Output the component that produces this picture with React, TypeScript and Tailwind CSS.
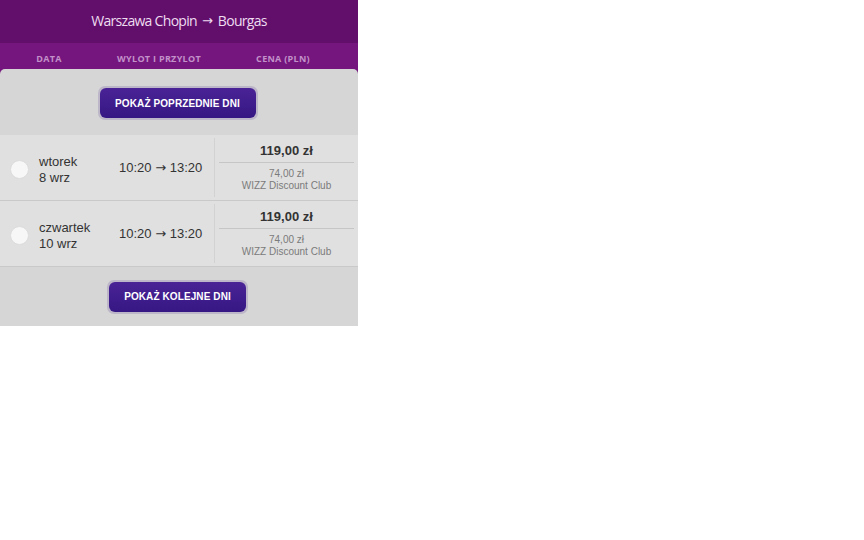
import React from 'react';

const rows = [
  { day: 'wtorek', date: '8 wrz', dep: '10:20', arr: '13:20', price: '119,00 zł', club: '74,00 zł' },
  { day: 'czwartek', date: '10 wrz', dep: '10:20', arr: '13:20', price: '119,00 zł', club: '74,00 zł' },
];

const Arrow = () => <span className="font-['DejaVu_Sans',sans-serif]">→</span>;

const NavButton: React.FC<{ label: string; width: string }> = ({ label, width }) => (
  <div className={`rounded-[7px] bg-[#bdb6c9] p-[2px] ${width}`}>
    <button
      type="button"
      className="w-full h-[30px] rounded-[6px] bg-gradient-to-b from-[#4a2396] to-[#351783] text-white text-[10px] font-bold font-['Liberation_Sans',sans-serif] tracking-[0.1px]"
    >
      {label}
    </button>
  </div>
);

export default function App() {
  return (
    <div className="w-[864px] h-[540px] bg-white">
      <div className="w-[358px] font-['Liberation_Sans',Arial,sans-serif]">
        {/* Route title */}
        <div className="h-[43px] pb-[3px] bg-[#620f6b] flex items-center justify-center gap-[5px] text-[14px] text-[#eedcf0] font-['Open_Sans',sans-serif] tracking-[-0.7px]">
          <span>Warszawa Chopin</span>
          <span className="text-[13px] tracking-normal translate-y-[1px]"><Arrow /></span>
          <span>Bourgas</span>
        </div>

        {/* Column headers */}
        <div className="bg-[#75167e]">
          <div className="h-[26px] pt-[6px] grid grid-cols-[98px_122px_138px] items-center text-[9px] font-bold text-[#c391c9] font-['Open_Sans',sans-serif] tracking-[0.3px]">
            <span className="text-center">DATA</span>
            <span className="text-center">WYLOT I PRZYLOT</span>
            <span className="text-center pr-[12px]">CENA (PLN)</span>
          </div>

          {/* Panel */}
          <div className="bg-[#d6d6d6] rounded-t-[5px]">
            <div className="h-[66px] flex items-center justify-center pt-[2px] pr-[3px]">
              <NavButton label="POKAŻ POPRZEDNIE DNI" width="w-[160px]" />
            </div>

            <div className="bg-[#e0e0e0]">
              {rows.map((r, i) => (
                <div key={i} className="h-[66px] flex items-stretch border-b border-[#c9c9c9]">
                  <div className="w-[214px] flex items-center pt-[4px]">
                    <div className="ml-[10px] w-[19px] h-[19px] rounded-full bg-[#f7f7f7] border border-[#dcdcdc]" />
                    <div className="ml-[10px] w-[80px] text-[13px] leading-[16px] text-[#333]">
                      <div>{r.day}</div>
                      <div>{r.date}</div>
                    </div>
                    <div className="text-[13px] text-[#333] -mt-[4px]">
                      {r.dep} <Arrow /> {r.arr}
                    </div>
                  </div>
                  <div className="flex-1 my-[3px] border-l border-[#d2d2d2] pl-[4px] pr-[4px] flex flex-col">
                    <div className="h-[25px] pt-[2px] flex items-center justify-center text-[13px] font-bold text-[#333] border-b border-[#c6c6c6]">
                      {r.price}
                    </div>
                    <div className="flex-1 flex flex-col items-center justify-center text-[10px] leading-[12px] text-[#7b7b7b] pb-[1px]">
                      <div>{r.club}</div>
                      <div>WIZZ Discount Club</div>
                    </div>
                  </div>
                </div>
              ))}
            </div>

            <div className="h-[59px] flex items-center justify-center pr-[3px]">
              <NavButton label="POKAŻ KOLEJNE DNI" width="w-[141px]" />
            </div>
          </div>
        </div>
      </div>
    </div>
  );
}
